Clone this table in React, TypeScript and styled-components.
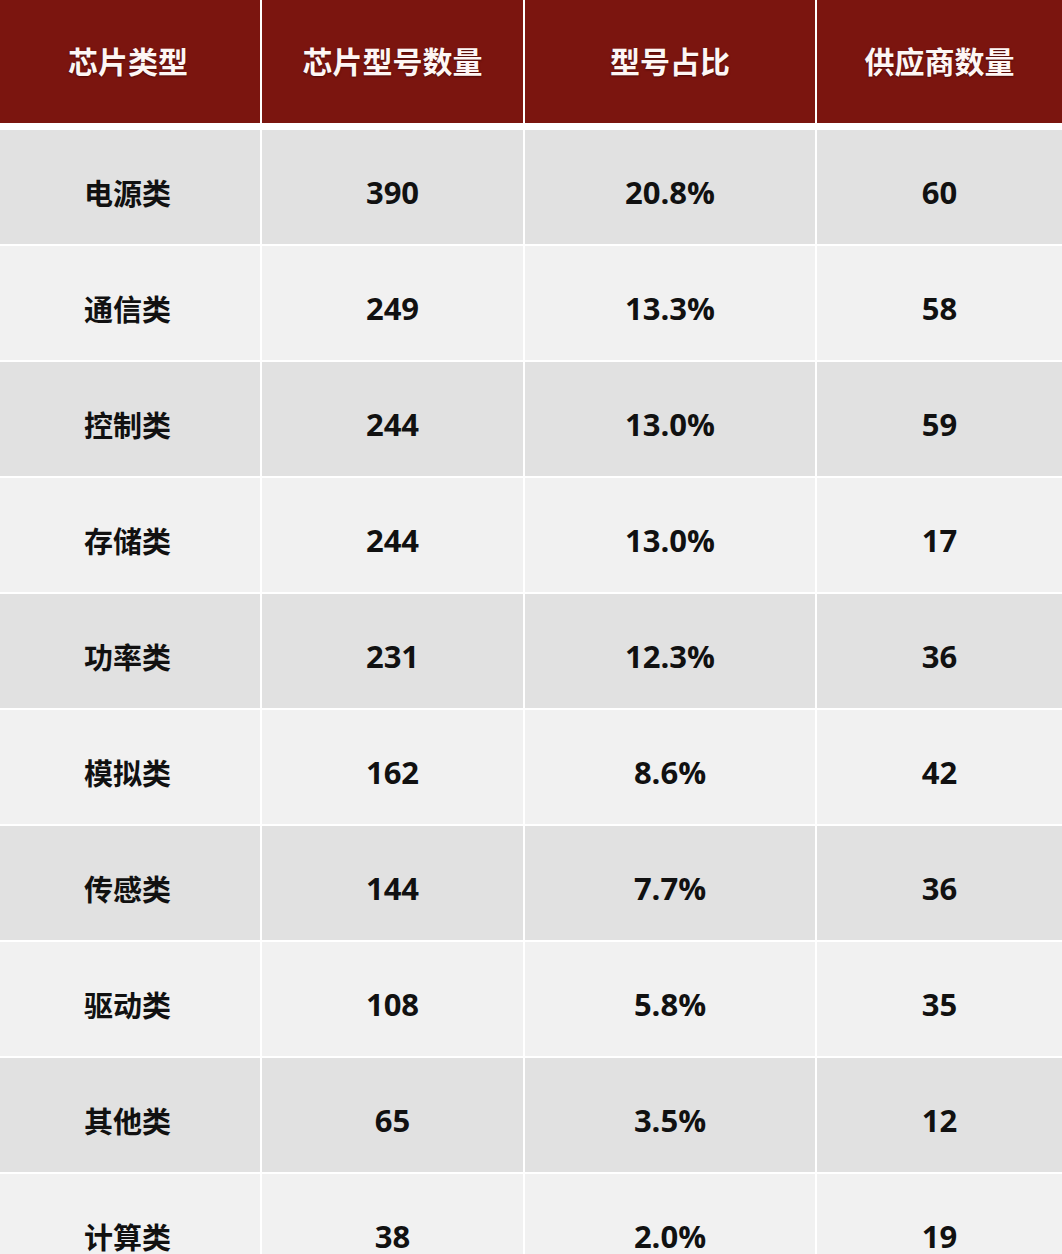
import React from 'react';
import styled, { createGlobalStyle } from 'styled-components';

const GlobalStyle = createGlobalStyle`
  html, body {
    margin: 0;
    padding: 0;
    background: #ffffff;
  }
  body {
    font-family: 'Open Sans', 'Noto Sans CJK SC', sans-serif;
  }
`;

const Page = styled.div`
  width: 1062px;
  height: 1254px;
  overflow: hidden;
  background: #ffffff;
`;

const Grid = styled.div`
  display: grid;
  grid-template-columns: 260px 261px 290px 1fr;
  column-gap: 2px;
  width: 1062px;
`;

const HeadCell = styled.div<{ $first: boolean }>`
  height: 123px;
  margin-bottom: 7px;
  background: #7b150f;
  color: #fdf6f4;
  display: flex;
  align-items: center;
  justify-content: center;
  font-size: 30px;
  font-weight: 700;
  text-shadow: 0 1px 2px rgba(40, 0, 0, 0.6);
  padding-bottom: 4px;
  padding-right: ${p => (p.$first ? '4px' : '0')};
  box-sizing: border-box;
`;

const Cell = styled.div<{ $dark: boolean; $first: boolean }>`
  height: 114px;
  margin-bottom: 2px;
  background: ${p => (p.$dark ? '#e1e1e1' : '#f1f1f1')};
  color: #111111;
  display: flex;
  align-items: center;
  justify-content: center;
  font-size: 31px;
  font-weight: 700;
  padding-top: 10px;
  padding-right: ${p => (p.$first ? '5px' : '0')};
  box-sizing: border-box;
`;

const CnText = styled.span`
  font-family: 'Noto Sans CJK SC', sans-serif;
  font-size: 29px;
`;

const headers = ['芯片类型', '芯片型号数量', '型号占比', '供应商数量'];

const rows: [string, string, string, string][] = [
  ['电源类', '390', '20.8%', '60'],
  ['通信类', '249', '13.3%', '58'],
  ['控制类', '244', '13.0%', '59'],
  ['存储类', '244', '13.0%', '17'],
  ['功率类', '231', '12.3%', '36'],
  ['模拟类', '162', '8.6%', '42'],
  ['传感类', '144', '7.7%', '36'],
  ['驱动类', '108', '5.8%', '35'],
  ['其他类', '65', '3.5%', '12'],
  ['计算类', '38', '2.0%', '19'],
];

const App: React.FC = () => {
  return (
    <Page>
      <GlobalStyle />
      <Grid>
        {headers.map((h, j) => (
          <HeadCell key={h} $first={j === 0}>
            {h}
          </HeadCell>
        ))}
        {rows.map((r, i) =>
          r.map((v, j) => (
            <Cell key={i + '-' + j} $dark={i % 2 === 0} $first={j === 0}>
              {j === 0 ? <CnText>{v}</CnText> : v}
            </Cell>
          )),
        )}
      </Grid>
    </Page>
  );
};

export default App;
